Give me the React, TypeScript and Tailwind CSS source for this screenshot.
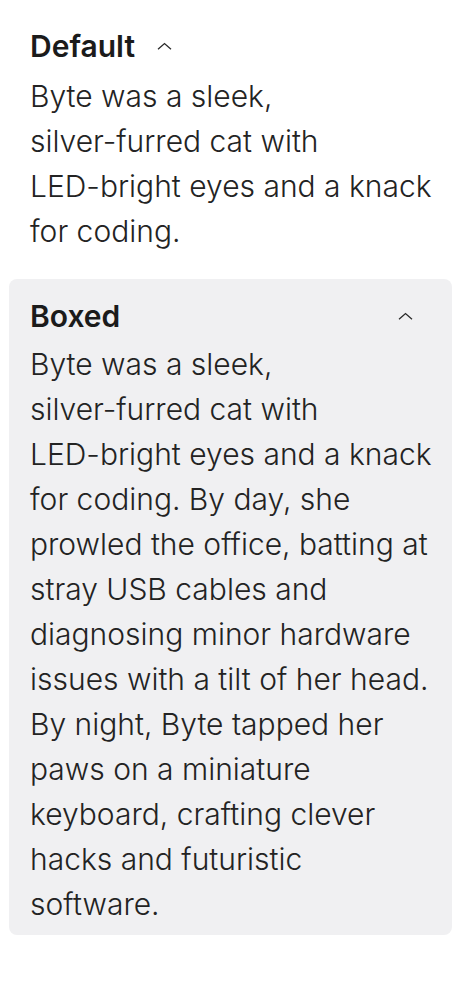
const defaultLines = ['Byte was a sleek,', 'silver-furred cat with', 'LED-bright eyes and a knack', 'for coding.']

const boxedLines = [
  'Byte was a sleek,',
  'silver-furred cat with',
  'LED-bright eyes and a knack',
  'for coding. By day, she',
  'prowled the office, batting at',
  'stray USB cables and',
  'diagnosing minor hardware',
  'issues with a tilt of her head.',
  'By night, Byte tapped her',
  'paws on a miniature',
  'keyboard, crafting clever',
  'hacks and futuristic',
  'software.',
]

function Chevron() {
  return (
    <svg width="15" height="8" viewBox="0 0 15 8" fill="none" className="shrink-0">
      <path d="M1 7.2L7.5 1.5L14 7.2" stroke="#2a2a2a" strokeWidth="1.3" />
    </svg>
  )
}

function Body({ lines, className }: { lines: string[]; className?: string }) {
  return (
    <p className={`text-[30px] font-light leading-[45px] text-[#232323] ${className ?? ''}`}>
      {lines.map((l) => (
        <span key={l} className="block whitespace-nowrap">
          {l}
        </span>
      ))}
    </p>
  )
}

export default function App() {
  return (
    <div
      className="min-h-screen bg-white px-[9px] pt-[12px]"
      style={{ fontFamily: 'Inter, "Noto Sans", sans-serif' }}
    >
      {/* Default */}
      <section className="px-[21px] pt-[14px] pb-[25px]">
        <div className="flex items-center gap-[22px]">
          <h2 className="text-[30px] leading-[40px] font-semibold text-[#1b1b1b]">Default</h2>
          <Chevron />
        </div>
        <Body lines={defaultLines} className="mt-[8px]" />
      </section>

      {/* Boxed */}
      <section className="rounded-[8px] bg-[#f0f0f2] px-[21px] pt-[17px] pb-[8px]">
        <div className="flex items-center justify-between">
          <h2 className="text-[30px] leading-[40px] font-semibold text-[#1b1b1b]">Boxed</h2>
          <div className="pr-[18px]">
            <Chevron />
          </div>
        </div>
        <Body lines={boxedLines} className="mt-[6px]" />
      </section>
    </div>
  )
}
